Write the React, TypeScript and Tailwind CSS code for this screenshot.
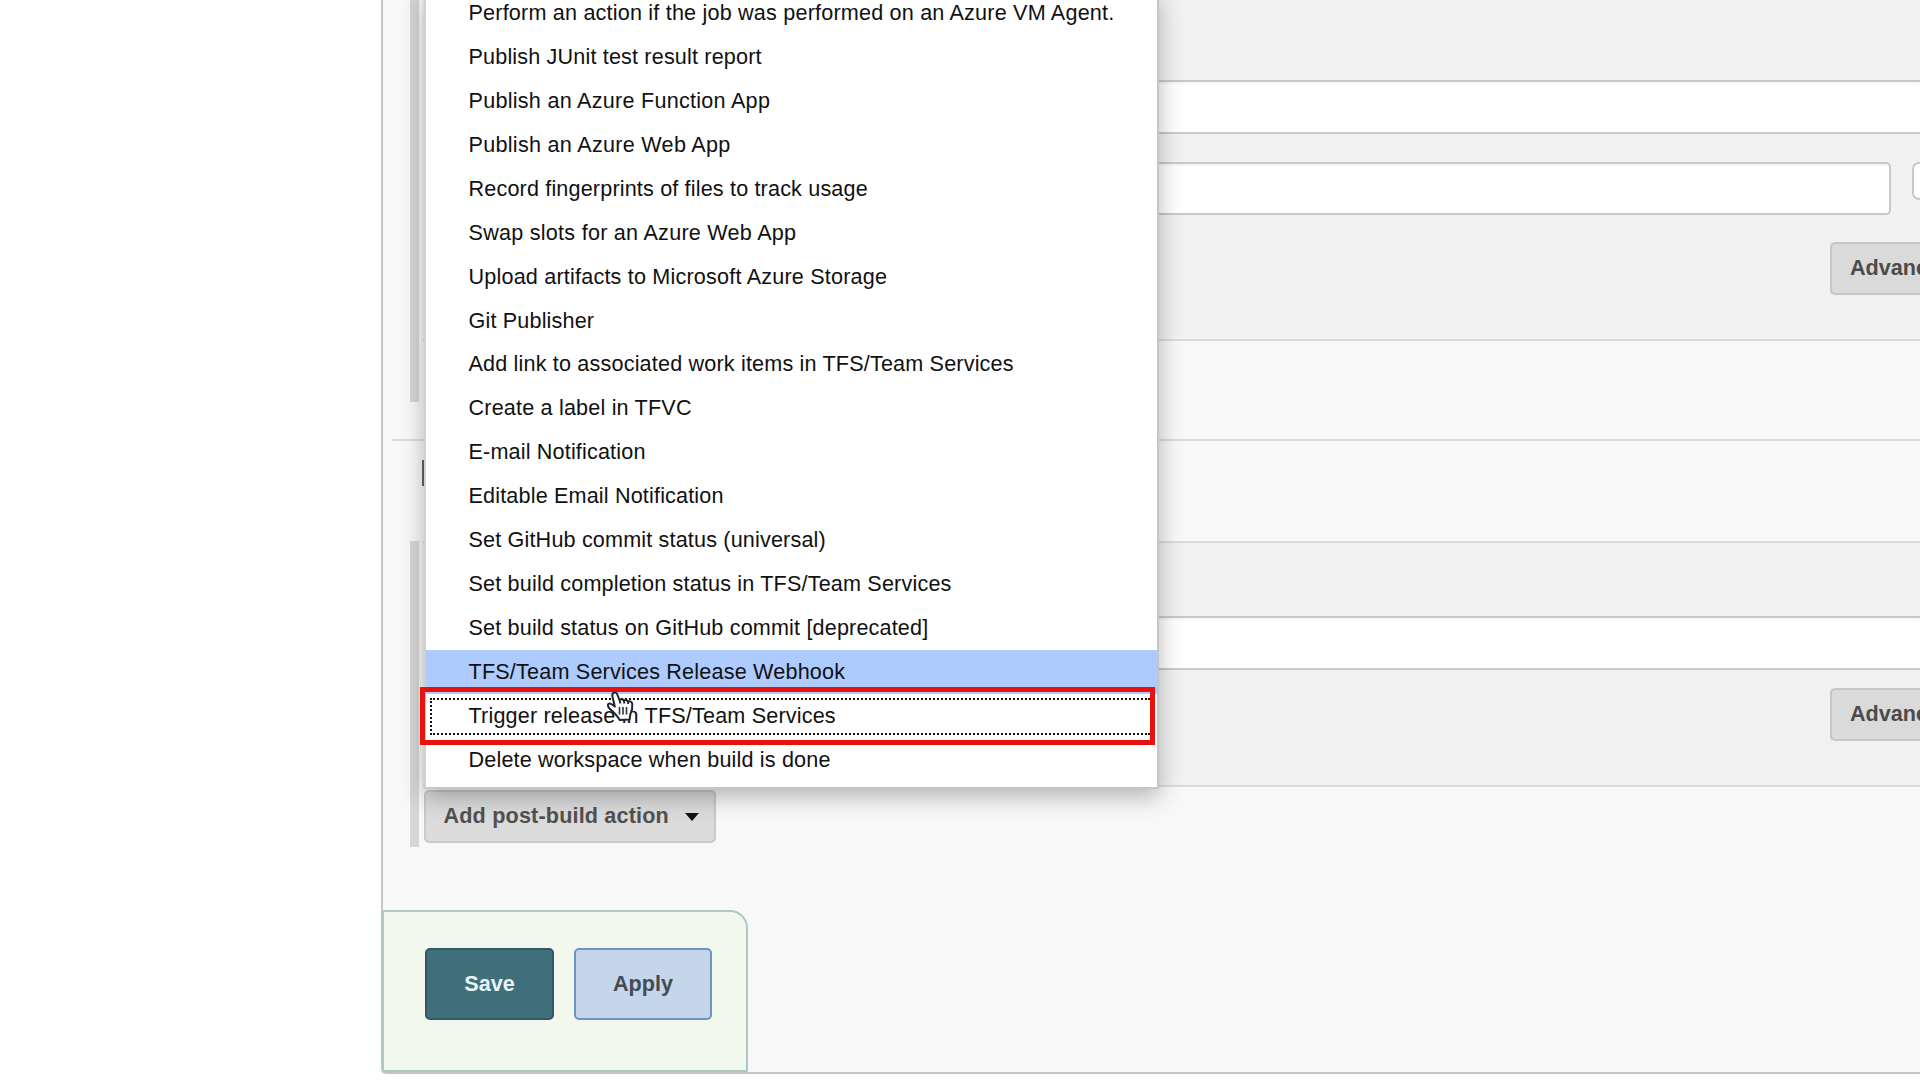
import React from "react";

type ItemData = { label: string; tracking?: string; active?: boolean };

const items: ItemData[] = [
  { label: "Perform an action if the job was performed on an Azure VM Agent.", tracking: "tracking-[0.19px]" },
  { label: "Publish JUnit test result report" },
  { label: "Publish an Azure Function App", tracking: "tracking-[0.26px]" },
  { label: "Publish an Azure Web App", tracking: "tracking-[0.28px]" },
  { label: "Record fingerprints of files to track usage" },
  { label: "Swap slots for an Azure Web App", tracking: "tracking-[0.25px]" },
  { label: "Upload artifacts to Microsoft Azure Storage", tracking: "tracking-[0.19px]" },
  { label: "Git Publisher" },
  { label: "Add link to associated work items in TFS/Team Services", tracking: "tracking-[0.17px]" },
  { label: "Create a label in TFVC", tracking: "tracking-[0.18px]" },
  { label: "E-mail Notification" },
  { label: "Editable Email Notification" },
  { label: "Set GitHub commit status (universal)" },
  { label: "Set build completion status in TFS/Team Services", tracking: "tracking-[0.17px]" },
  { label: "Set build status on GitHub commit [deprecated]" },
  { label: "TFS/Team Services Release Webhook", tracking: "tracking-[0.19px]", active: true },
  { label: "Trigger release in TFS/Team Services", tracking: "tracking-[0.17px]" },
  { label: "Delete workspace when build is done" },
];

function MenuItem({ label, tracking = "tracking-[0.16px]", active }: ItemData) {
  return (
    <li
      className={`flex h-[43.93px] items-center pb-[0.2px] pl-[42.5px] text-[21.6px] leading-none whitespace-nowrap text-[#111] ${tracking} ${
        active ? "bg-[#adcbfd]" : ""
      }`}
    >
      {label}
    </li>
  );
}

function ActionMenu() {
  return (
    <ul className="absolute -top-[9px] left-[424px] h-[798px] w-[735px] border-2 border-t-0 border-[#c6c6c6] border-l-[#d0d0d0] bg-white shadow-[0_8px_22px_rgba(0,0,0,0.28)]">
      {items.map((item) => (
        <MenuItem key={item.label} {...item} />
      ))}
    </ul>
  );
}

function HandCursor() {
  return (
    <svg className="absolute top-[691px] left-[605px]" width="30" height="33" viewBox="0 0 30 33">
      <path
        d="M8.5 2 C10 1 11.5 1.5 12.3 3.5 L14.5 9 C16 7.6 18 8 18.8 9.4 C20.5 8.6 22 9 23 10.6 C25 9.8 27 10.8 27.3 13 C27.6 17 27 20 25.4 23 L24.6 28.5 L14.5 29 C13 25 8 21 4.5 17.5 C2 14.5 2.5 12.6 4.6 12.4 C6.5 12.3 8 14 9.8 15.5 L7.4 5.5 C7 3.5 7.4 2.5 8.5 2 Z"
        fill="#fff"
        stroke="#1c2630"
        strokeWidth="2"
        strokeLinejoin="round"
      />
      <path d="M14.5 9 L15.4 12.5 M18.8 9.4 L19.4 12.5 M23 10.6 L23.2 13" stroke="#1c2630" strokeWidth="1.8" />
      <path d="M14.5 16 V23.5 M18 16 V23.5 M21.5 16 V23.5" stroke="#333" strokeWidth="1.6" />
    </svg>
  );
}

const field =
  "ml-[10px] border-y-2 border-[#c8c8c8] bg-white shadow-[inset_0_2px_2px_rgba(0,0,0,0.04)]";

function AdvancedButton() {
  return (
    <button className="ml-auto block h-[53px] w-[90px] shrink-0 overflow-hidden rounded-l-[5px] border-2 border-r-0 border-[#c6c6c6] bg-[#dadada] pb-px pl-[18px] text-left text-[21.6px] leading-none font-bold text-[#4b4b4b]">
      Advanced...
    </button>
  );
}

export default function App() {
  return (
    <div className="relative flex h-[1080px] w-[1920px] overflow-hidden bg-white pl-[381px] font-['Liberation_Sans',Arial,sans-serif]">
      <main className="flex h-[1074px] flex-1 flex-col rounded-bl-[5px] border-b-2 border-l-2 border-[#c4c4c4] bg-[#f8f8f8]">
        <div className="flex h-[402px] shrink-0 pl-[27px]">
          <div className="w-[9px] bg-[#d6d6d6]" />
          <section className="ml-[4px] flex h-[341px] flex-1 flex-col border-b-2 border-[#dadada] bg-[#f1f1f1] pt-[80px]">
            <div className={field + " h-[54px]"} />
            <div className="mt-[28px] flex items-start">
              <div className={field + " h-[53px] w-[1458px] rounded-r-[5px] border-r-2"} />
              <div className="ml-[21px] h-[38px] flex-1 rounded-l-[7px] border-2 border-r-0 border-[#c8c8c8] bg-white" />
            </div>
            <div className="mt-[27px] flex">
              <AdvancedButton />
            </div>
          </section>
        </div>
        <div className="mt-[37px] ml-[9px] h-[102px] shrink-0 border-t-2 border-[#dcdcdc] pt-[19px] pl-[30px]">
          <div className="h-[26px] w-[5px] bg-[#636363]" />
        </div>
        <div className="flex h-[306px] shrink-0 pl-[27px]">
          <div className="w-[9px] bg-[#d6d6d6]" />
          <div className="flex flex-1 flex-col pl-[4px]">
            <section className="flex h-[246px] flex-col border-y-2 border-[#dadada] bg-[#f1f1f1] pt-[73px]">
              <div className={field + " h-[54px]"} />
              <div className="mt-[18px] flex">
                <AdvancedButton />
              </div>
            </section>
            <button className="mt-[3px] ml-px flex h-[53px] w-[292px] items-center gap-[16px] rounded-[5px] border-2 border-[#c9c9c9] bg-[#dbdbdb] pb-px pl-[17.5px] text-[21.6px] leading-none font-bold tracking-[0.17px] whitespace-nowrap text-[#505050]">
              <span>Add post-build action</span>
              <svg className="mt-[2px]" width="14" height="8" viewBox="0 0 14 8">
                <path d="M0 0 H14 L7 8 Z" fill="#111" />
              </svg>
            </button>
          </div>
        </div>
        <footer className="mt-[63px] -ml-px flex h-[162px] w-[366px] shrink-0 gap-[20px] rounded-tr-[18px] border-2 border-[#adcbbb] bg-[#f2f8ed] pt-[36px] pl-[41px] text-[21.6px] leading-none font-bold">
          <button className="h-[72px] w-[129px] rounded-[5px] border-2 border-[#355860] bg-[#406f7c] pb-px text-[#e6f4f8]">
            Save
          </button>
          <button className="h-[72px] w-[138px] rounded-[5px] border-2 border-[#6d95c2] bg-[#c5d6eb] pb-px text-[#434b53]">
            Apply
          </button>
        </footer>
      </main>

      <ActionMenu />
      <div className="absolute top-[687px] left-[420px] h-[58px] w-[735px] border-[5px] border-[#e8110b]" />
      <div className="absolute top-[698px] left-[430px] h-[37px] w-[720px] border-2 border-r-0 border-dotted border-[#111]" />
      <HandCursor />
    </div>
  );
}
